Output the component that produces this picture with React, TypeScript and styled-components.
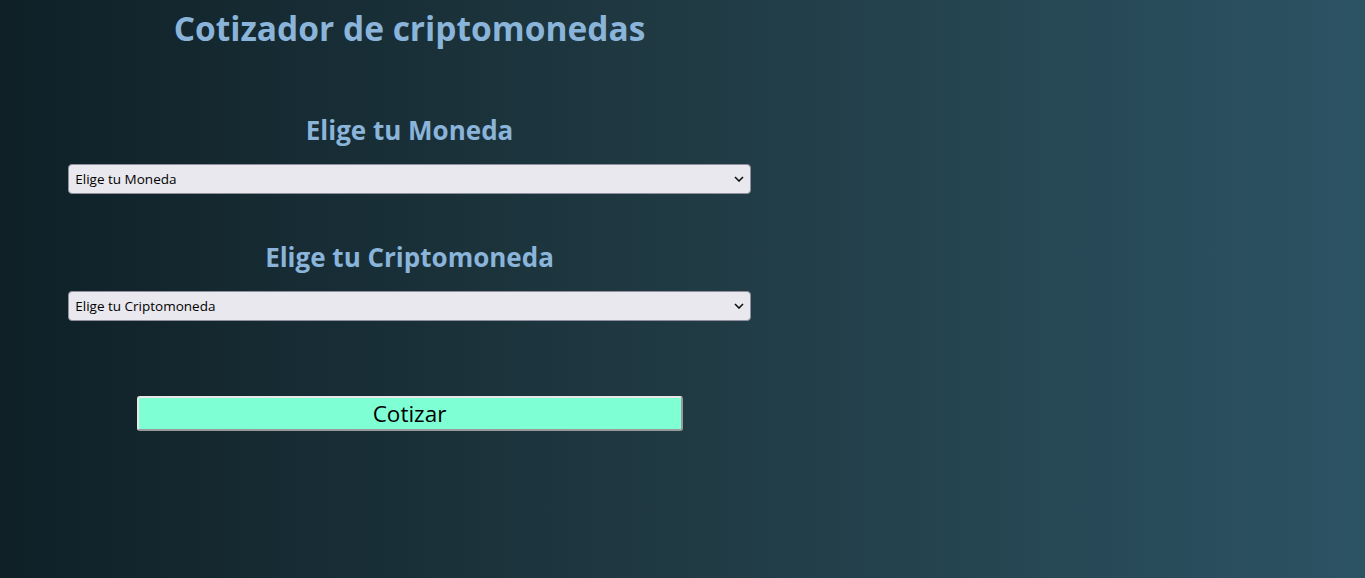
import React from "react";
import styled, { createGlobalStyle } from "styled-components";

const GlobalStyle = createGlobalStyle`
  html, body {
    margin: 0;
    padding: 0;
  }
  body {
    min-height: 100vh;
    background: linear-gradient(to right, #0f2027, #203a43, #2c5364);
    font-family: "Open Sans", "Noto Sans", sans-serif;
  }
`;

const chevron =
  "data:image/svg+xml;utf8," +
  encodeURIComponent(
    '<svg xmlns="http://www.w3.org/2000/svg" width="10" height="6" viewBox="0 0 10 6"><path d="M1 1l4 4 4-4" fill="none" stroke="#111" stroke-width="1.6"/></svg>'
  );

const Page = styled.div`
  min-height: 578px;
`;

const Container = styled.main`
  width: 50%;
  margin-left: 5%;
  padding-top: 7px;
`;

const Title = styled.h1`
  margin: 0;
  font-size: 33.5px;
  font-weight: 700;
  color: #8ab4d9;
  text-align: center;
  line-height: 43.6px;
`;

const Form = styled.form`
  display: flex;
  flex-direction: column;
  margin-top: 60.4px;
  gap: 44.6px;
`;

const Field = styled.div`
  display: flex;
  flex-direction: column;
`;

const Label = styled.h2`
  margin: 0 0 17px;
  padding-top: 3px;
  font-size: 26px;
  font-weight: 700;
  color: #8ab4d9;
  text-align: center;
  line-height: 32.7px;
`;

const Select = styled.select`
  appearance: none;
  height: 30px;
  width: 100%;
  box-sizing: border-box;
  padding: 0 20px 0 6px;
  font-family: "Open Sans", "Noto Sans", sans-serif;
  font-size: 13.5px;
  color: #000;
  background-color: #e9e8ee;
  background-image: url("${chevron}");
  background-repeat: no-repeat;
  background-position: right 6px center;
  background-size: 10px 6px;
  border: 1px solid #8f8f9d;
  border-radius: 4px;
`;

const Submit = styled.button`
  align-self: center;
  width: 80%;
  height: 35px;
  margin-top: 30.4px;
  box-sizing: border-box;
  background-color: #7fffd4;
  border-width: 2px;
  border-style: solid;
  border-color: #e8e8e8 #9a9a9a #9a9a9a #e8e8e8;
  border-radius: 3px;
  font-family: "Open Sans", "Noto Sans", sans-serif;
  font-size: 22.5px;
  color: #000;
  padding: 2px 0 0;
  line-height: 1;
  cursor: pointer;
`;

export default function App() {
  return (
    <Page>
      <GlobalStyle />
      <Container>
        <Title>Cotizador de criptomonedas</Title>
        <Form onSubmit={(e) => e.preventDefault()}>
          <Field>
            <Label>Elige tu Moneda</Label>
            <Select defaultValue="">
              <option value="">Elige tu Moneda</option>
              <option value="USD">Dólar de Estados Unidos</option>
              <option value="MXN">Peso Mexicano</option>
              <option value="EUR">Euro</option>
            </Select>
          </Field>
          <Field>
            <Label>Elige tu Criptomoneda</Label>
            <Select defaultValue="">
              <option value="">Elige tu Criptomoneda</option>
            </Select>
          </Field>
          <Submit type="submit">Cotizar</Submit>
        </Form>
      </Container>
    </Page>
  );
}
